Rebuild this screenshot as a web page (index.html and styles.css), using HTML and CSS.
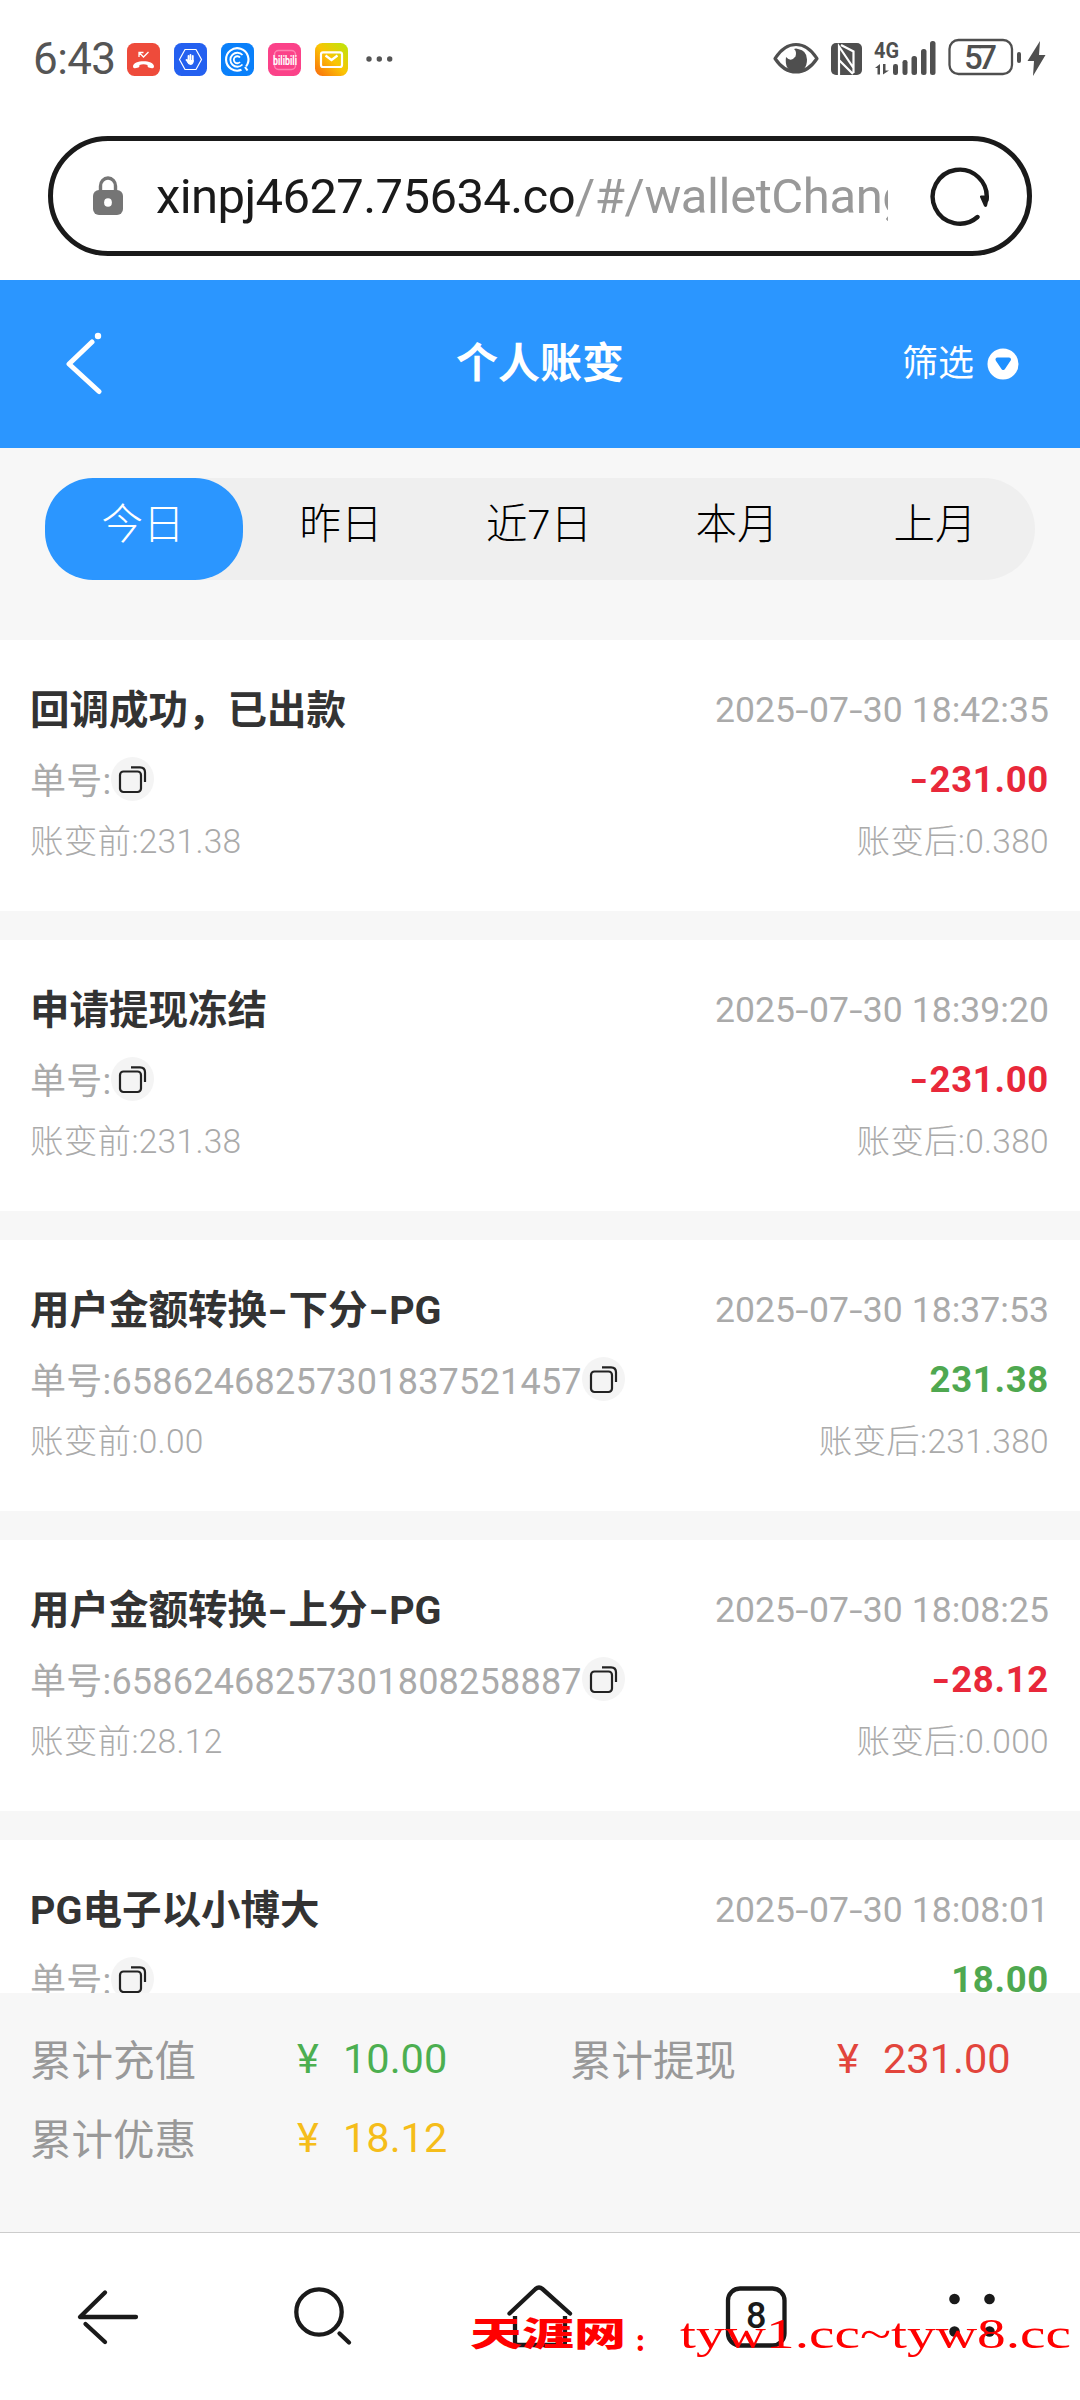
FILE: index.html
```html
<!DOCTYPE html>
<html lang="zh-CN">
<head>
<meta charset="utf-8">
<title>个人账变</title>
<link rel="stylesheet" href="styles.css">
</head>
<body>
<svg class="defs" width="0" height="0">
  <symbol id="copy" viewBox="0 0 43 44">
    <ellipse cx="21.5" cy="22" rx="21.5" ry="22" fill="#f4f4f4"/>
    <rect x="9" y="14.5" width="21" height="20.5" rx="3.5" fill="none" stroke="#222" stroke-width="2.2"/>
    <path d="M20 10.3h9q5 0 5 5V25" fill="none" stroke="#222" stroke-width="2.2"/>
  </symbol>
</svg>

<header class="status">
  <span class="time">6:43</span>
  <div class="apps">
    <svg viewBox="0 0 33 33"><rect width="33" height="33" rx="7.5" fill="#ee4b3b"/><path d="M6 23.5c0-7 21-7 21 0q0 2-2 1.700l-3.500-.8q-1.300-.4-1-2.400-4-1.400-8 0 .3 2-1 2.400l-3.500.8q-2 .3-2-1.700z" fill="#fff"/><path d="M12 14V9.500h4.500M12 9.500l4.500 4.500 5-5" fill="none" stroke="#fff" stroke-width="1.300"/></svg>
    <svg viewBox="0 0 33 33"><rect width="33" height="33" rx="7.500" fill="#2460f0"/><path d="M11 6.500h11l5.500 10-5.500 10H11l-5.500-10z" fill="none" stroke="#fff" stroke-width="1.200"/><path d="M12.500 17l2 2v-6M16.500 18v-6M18.800 18v-5" stroke="#fff" stroke-width="1.800" stroke-linecap="round" fill="none"/><path d="M13.500 17h6.200v2q-.8 3-3.200 3t-3.500-3z" fill="#fff"/></svg>
    <svg viewBox="0 0 33 33"><rect width="33" height="33" rx="7.500" fill="#0a80fa"/><path d="M20.500 26.800a11.200 11.200 0 1 1 4.600-3.500M24 24l2.500 3.500" fill="none" stroke="#fff" stroke-width="2.100"/><path d="M21.500 12a7 7 0 1 0 0 9.500" fill="none" stroke="#fff" stroke-width="1.800"/><path d="M19 14.500a3.500 3.500 0 1 0 0 4.500" fill="none" stroke="#fff" stroke-width="1.800"/></svg>
    <svg viewBox="0 0 33 33"><rect width="33" height="33" rx="7.500" fill="#fb4289"/><rect x="6.500" y="7.500" width="21" height="19" rx="4" fill="none" stroke="#ff82b1" stroke-width="1.500"/><text x="5" y="22" class="bili" textLength="24" lengthAdjust="spacingAndGlyphs">bilibili</text></svg>
    <svg viewBox="0 0 33 33"><defs><linearGradient id="mail" x1="1" y1="0" x2="0" y2="1"><stop offset="0" stop-color="#b8e80c"/><stop offset=".5" stop-color="#fbc404"/><stop offset="1" stop-color="#f9690e"/></linearGradient></defs><rect width="33" height="33" rx="7.500" fill="url(#mail)"/><rect x="6" y="9.300" width="21" height="14.700" rx="2" fill="none" stroke="#fff" stroke-width="2.200"/><path d="M10.500 12.500l6 4.500 6-4.500" fill="none" stroke="#fff" stroke-width="2.200"/></svg>
  </div>
  <svg class="more" viewBox="0 0 28 8" fill="#555"><circle cx="4" cy="4" r="2.700"/><circle cx="14.300" cy="4" r="2.700"/><circle cx="24.700" cy="4" r="2.700"/></svg>
  <svg class="signals" viewBox="0 0 276 40">
    <g fill="none" stroke="#4f4f4f">
      <path d="M5 21.500Q14 7.500 26 7.500t21 14Q38 35 26 35T5 21.500z" stroke-width="3.200" stroke-linejoin="round"/>
      <rect x="179.500" y="3" width="62.500" height="34" rx="9" stroke-width="2.300"/>
    </g>
    <g fill="#4f4f4f">
      <path d="M16 20q-2 14 10 15 11-1 11-12.500 0-9-9-10.500-2-1-4 0 3 2 1.500 7.500Q21 25.500 16 20z"/>
      <rect x="61" y="6" width="31" height="32" rx="5"/>
      <rect x="123" y="27" width="5" height="11" rx="2.200"/><rect x="132.500" y="23" width="5" height="15" rx="2.200"/><rect x="141.500" y="19" width="5.500" height="19" rx="2.500"/><rect x="151" y="12" width="5.500" height="26" rx="2.500"/><rect x="160" y="4" width="5.500" height="34" rx="2.500"/>
      <rect x="247" y="15" width="4" height="11" rx="2"/>
      <path d="M270 4l-12.500 20h6.500l-1 15L275.500 18H269z"/>
      <path d="M105 31l5-4v10.500h-2.500V31zM113 27h2.500v6.500h3.500l-6 4z"/>
    </g>
    <path d="M69 38V9.500L83.500 31M71 8l12.500 6.500V36M69 23l14 14" fill="none" stroke="#fff" stroke-width="2.200"/>
    <text x="104" y="21" class="net" textLength="25" lengthAdjust="spacingAndGlyphs">4G</text>
    <text x="194" y="31.500" class="charge" textLength="33">57</text>
  </svg>
</header>

<div class="browser">
  <div class="address">
    <svg class="lock" viewBox="0 0 30 40"><path d="M7.500 16V10a7.500 8 0 0 1 15 0v6" fill="none" stroke="#757575" stroke-width="3.400"/><rect y="14" width="30" height="25" rx="6" fill="#757575"/><ellipse cx="15" cy="26.500" rx="3.900" ry="4.300" fill="#fff"/></svg>
    <div class="url"><span class="host">xinpj4627.75634.co</span><span class="path">/#/walletChange</span></div>
    <svg class="reload" viewBox="0 0 60 60"><path d="M47.500 51A27 27 0 1 1 56.500 34" fill="none" stroke="#1a1a1a" stroke-width="4.400" stroke-linecap="round"/><path d="M50 31q-.5-1.500 1-1.500h7q1.500 0 1 1.500l-2 9q-1.300 2-3 0z" fill="#1a1a1a"/></svg>
  </div>
</div>

<div class="titlebar">
  <svg class="back" viewBox="0 0 38 66" fill="none" stroke="#fff" stroke-width="5" stroke-linecap="round" stroke-linejoin="round"><path d="M28 11L5 33l30 27.500"/><circle cx="34" cy="5" r="3.200" fill="#fff" stroke="none"/></svg>
  <h1>个人账变</h1>
  <div class="filter">筛选<svg viewBox="0 0 32 32"><circle cx="16" cy="16" r="15.500" fill="#fff"/><path d="M10.500 11.500h11.500l-5.700 8.500z" fill="#1e90ff" stroke="#1e90ff" stroke-width="4" stroke-linejoin="round"/></svg></div>
</div>

<nav class="tabs"><span class="active">今日</span><span>昨日</span><span>近7日</span><span>本月</span><span>上月</span></nav>

<main class="list">
  <article>
    <h2>回调成功，已出款</h2><time>2025<i>-</i>07<i>-</i>30 18:42:35</time>
    <div class="order">单号:<svg><use href="#copy"/></svg></div><b class="out"><i>-</i>231.00</b>
    <p>账变前:231.38</p><p class="after">账变后:0.380</p>
  </article>
  <article>
    <h2>申请提现冻结</h2><time>2025<i>-</i>07<i>-</i>30 18:39:20</time>
    <div class="order">单号:<svg><use href="#copy"/></svg></div><b class="out"><i>-</i>231.00</b>
    <p>账变前:231.38</p><p class="after">账变后:0.380</p>
  </article>
  <article>
    <h2>用户金额转换<i>-</i>下分<i>-</i>PG</h2><time>2025<i>-</i>07<i>-</i>30 18:37:53</time>
    <div class="order">单号:65862468257301837521457<svg><use href="#copy"/></svg></div><b class="in">231.38</b>
    <p>账变前:0.00</p><p class="after">账变后:231.380</p>
  </article>
  <article>
    <h2>用户金额转换<i>-</i>上分<i>-</i>PG</h2><time>2025<i>-</i>07<i>-</i>30 18:08:25</time>
    <div class="order">单号:65862468257301808258887<svg><use href="#copy"/></svg></div><b class="out"><i>-</i>28.12</b>
    <p>账变前:28.12</p><p class="after">账变后:0.000</p>
  </article>
  <article>
    <h2>PG电子以小博大</h2><time>2025<i>-</i>07<i>-</i>30 18:08:01</time>
    <div class="order">单号:<svg><use href="#copy"/></svg></div><b class="in">18.00</b>
  </article>
</main>

<section class="totals">
  <div><span>累计充值</span><em class="green"><i>¥</i>10.00</em></div>
  <div><span>累计提现</span><em class="red"><i>¥</i>231.00</em></div>
  <div><span>累计优惠</span><em class="gold"><i>¥</i>18.12</em></div>
</section>

<footer class="toolbar">
  <svg viewBox="0 0 216 167"><path d="M105 59.500L80 84h56M85.500 91L105 109" /></svg>
  <svg viewBox="0 0 216 167"><circle cx="103" cy="79" r="22.700"/><path d="M123.500 100.500l9.500 9"/></svg>
  <svg viewBox="0 0 216 167"><path d="M77.500 80.500L103.500 56q3.500-3 7 0l27.500 24.500"/><path d="M83 83v26q0 3 3 3h44q3 0 3-3V83" stroke-linecap="butt"/></svg>
  <svg viewBox="0 0 216 167"><rect x="80" y="55.500" width="56.500" height="57" rx="12"/><text x="108.300" y="95" class="count">8</text></svg>
  <svg viewBox="0 0 216 167" class="dots"><circle cx="90.500" cy="66" r="5.300"/><circle cx="125.500" cy="66" r="5.300"/><circle cx="90.500" cy="98.500" r="5.300"/><circle cx="125.500" cy="98.500" r="5.300"/></svg>
  <svg class="mark" viewBox="0 0 610 60">
    <text x="0" y="41" class="mark-name" textLength="156" lengthAdjust="spacingAndGlyphs">天涯网</text>
    <text x="165" y="46" class="mark-colon">:</text>
    <text x="210" y="43" class="mark-site" textLength="391" lengthAdjust="spacingAndGlyphs">tyw1.cc~tyw8.cc</text>
  </svg>
</footer>
</body>
</html>
```
FILE: styles.css
```css
* { box-sizing: border-box; margin: 0; padding: 0; }
body {
  width: 1080px; height: 2400px; overflow: hidden;
  display: flex; flex-direction: column;
  background: #f7f7f7;
  font-family: Roboto, "Noto Sans CJK SC", sans-serif;
}
svg { display: block; flex: none; }
.defs { position: absolute; }

.status { flex: none; height: 118px; padding: 0 34px 0 33px; display: flex; align-items: center; background: #fff; }
.time { width: 94px; font-size: 44px; line-height: 56px; color: #555; letter-spacing: -.6px; white-space: nowrap; }
.apps { display: flex; gap: 14px; }
.apps svg { width: 33px; height: 33px; }
.bili { font: bold 13px Roboto, sans-serif; fill: #fff; }
.more { width: 28px; height: 8px; margin-left: 17px; }
.signals { width: 276px; height: 40px; margin: 0 0 4px auto; }
.net { font: bold 22px Roboto, sans-serif; fill: #4f4f4f; }
.charge { font: 500 33px Roboto, sans-serif; fill: #4f4f4f; }

.browser { flex: none; height: 162px; padding: 18px 48px 24px; background: #fff; }
.address {
  height: 120px; padding: 0 37px 0 40px;
  display: flex; align-items: center;
  border: 5px solid #1a1a1a; border-radius: 60px;
}
.lock { width: 30px; height: 40px; }
.url { width: 732px; margin-left: 33px; padding-top: 2px; overflow: hidden; white-space: nowrap; font-size: 49px; line-height: 70px; }
.host { color: #1a1a1a; letter-spacing: -.6px; }
.path { color: #999; letter-spacing: -.4px; }
.reload { width: 60px; height: 60px; margin-left: auto; }

.titlebar {
  flex: none; height: 168px; padding: 0 61px 0 64px; background: #2b96ff; color: #fff;
  display: grid; grid-template-columns: 1fr auto 1fr; align-items: center;
}
.back { width: 38px; height: 66px; }
h1 { font-size: 42px; line-height: 60px; font-weight: 700; margin-right: 3px; }
.filter { justify-self: end; display: flex; align-items: center; gap: 13px; font-size: 36px; line-height: 50px; }
.filter svg { width: 32px; height: 32px; }

.tabs { flex: none; height: 102px; margin: 30px 45px 60px; display: grid; grid-template-columns: repeat(5, 1fr); border-radius: 51px; background: #efefef; }
.tabs span { border-radius: 48px; font-size: 41.500px; line-height: 94px; font-weight: 300; text-align: center; text-indent: -2px; color: #000; }
.tabs .active { background: #2b96ff; color: #fff; }

.list { flex: none; height: 1353px; overflow: hidden; display: flex; flex-direction: column; gap: 29px; }
article {
  flex: none; height: 271px; padding: 35px 31px 0 30px; background: #fff;
  display: grid; grid-template-columns: 1fr auto; grid-template-rows: 68px 70px 52px; align-items: center;
  white-space: nowrap; color: #aaa;
}
article i { display: inline-block; font-style: normal; transform: scaleX(1.35); margin: 0 2px; }
h2 { font-size: 39.500px; line-height: 60px; color: #333; font-weight: 700; padding-top: 3px; }
h2 i { margin: 0 3px; }
time { text-align: right; font-size: 35.500px; padding-top: 2px; letter-spacing: .05px; }
.order { display: flex; align-items: center; font-size: 36px; letter-spacing: .22px; }
.order svg { width: 43px; height: 44px; position: relative; top: 1px; }
b { text-align: right; font-size: 36.500px; padding-top: 2px; letter-spacing: .7px; }
.out { color: #e8283a; }
.in { color: #4fa850; }
p { font-size: 33.500px; font-weight: 300; letter-spacing: .3px; padding-bottom: 2px; }
.after { text-align: right; }

.totals { flex: none; height: 239px; padding: 26px 31px 0 30px; display: grid; grid-template-columns: 540px 1fr; grid-auto-rows: 79px; }
.totals div { display: flex; align-items: center; font-size: 41.500px; color: #999; white-space: nowrap; }
.totals span { width: 267px; padding-bottom: 2px; }
.totals em, .totals i { font-style: normal; }
.totals i { display: inline-block; width: 46px; }
.green { color: #4caf50; }
.red { color: #e2453c; }
.gold { color: #f5bd1a; }

.toolbar { flex: none; position: relative; height: 168px; border-top: 1px solid #ccc; background: #fff; display: grid; grid-template-columns: repeat(5, 216px); }
.toolbar svg { height: 167px; fill: none; stroke: #1a1a1a; stroke-width: 4.300; stroke-linecap: round; stroke-linejoin: round; }
.toolbar .dots { fill: #1a1a1a; stroke: none; }
.toolbar text { stroke: none; }
.toolbar .count { font: 500 36px Roboto, sans-serif; fill: #1a1a1a; text-anchor: middle; }
.toolbar .mark { position: absolute; left: 470px; top: 72px; width: 610px; height: 60px; fill: #f00; }
.mark-name { font: 900 33px "Noto Sans CJK SC", sans-serif; }
.mark-colon { font: bold 33px "Liberation Serif", serif; }
.mark-site { font: 42px "Liberation Serif", serif; }
```
